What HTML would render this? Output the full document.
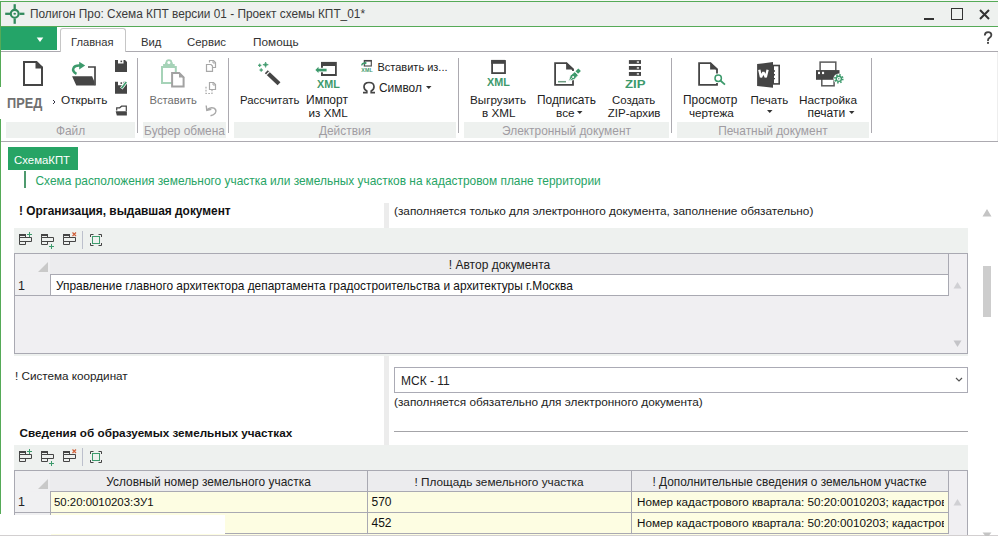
<!DOCTYPE html>
<html><head><meta charset="utf-8">
<style>
*{box-sizing:border-box;margin:0;padding:0}
html,body{width:998px;height:536px;overflow:hidden;background:#fff;font-family:"Liberation Sans",sans-serif;font-size:12px;color:#222}
.a{position:absolute}
.t{position:absolute;white-space:nowrap;line-height:1}
svg.a{overflow:visible}
</style></head><body>
<div class="a" style="left:0px;top:0px;width:998px;height:1px;background:#f6f9f6;"></div>
<div class="a" style="left:0px;top:1px;width:998px;height:1px;background:#55aa57;"></div>
<div class="a" style="left:1px;top:2px;width:997px;height:24px;background:#eef1ef;"></div>
<div class="a" style="left:0px;top:26px;width:998px;height:1px;background:#55aa57;"></div>
<svg class="a" style="left:4px;top:3px" width="22" height="22" viewBox="0 0 22 22"><g stroke="#318a5c" stroke-width="2.3" fill="none"><line x1="1.2" y1="10.8" x2="6" y2="10.8"/><line x1="15.5" y1="10.8" x2="20.4" y2="10.8"/><line x1="10.7" y1="1.2" x2="10.7" y2="6"/><line x1="10.7" y1="15.5" x2="10.7" y2="20.8"/><circle cx="10.7" cy="10.8" r="3.9" stroke-width="2.1"/></g><ellipse cx="10.7" cy="10.8" rx="1.3" ry="1" fill="#318a5c"/></svg>
<div class="t" style="left:30px;top:8.00px;font-size:12.3px;color:#3a3a3a;font-weight:normal;transform:scaleX(0.963);transform-origin:0 0">Полигон Про: Схема КПТ версии 01 - Проект схемы КПТ_01*</div>
<div class="a" style="left:924px;top:18px;width:10px;height:2px;background:#333;"></div>
<div class="a" style="left:951px;top:8px;width:12px;height:12px;border:1.6px solid #333"></div>
<svg class="a" style="left:979px;top:9px" width="11" height="11" viewBox="0 0 11 11"><path d="M1 1L10 10M10 1L1 10" stroke="#333" stroke-width="2"/></svg>
<div class="a" style="left:1px;top:27px;width:56px;height:23px;background:#24a468;"></div>
<svg class="a" style="left:36px;top:37px" width="8" height="6" viewBox="0 0 8 6"><path d="M0.7 0.5H7.3L4 5Z" fill="#fff"/></svg>
<div class="a" style="left:0px;top:51px;width:998px;height:1px;background:#acaab0;"></div>
<div class="a" style="left:60px;top:28px;width:66px;height:24px;background:#fff;border:1px solid #c6c6c6;border-bottom:none;border-radius:3px 3px 0 0"></div>
<div class="t" style="left:71px;top:37.00px;font-size:11.2px;color:#333;font-weight:normal;">Главная</div>
<div class="t" style="left:141px;top:37.00px;font-size:11.3px;color:#333;font-weight:normal;">Вид</div>
<div class="t" style="left:187px;top:37.00px;font-size:11.4px;color:#333;font-weight:normal;">Сервис</div>
<div class="t" style="left:253px;top:37.00px;font-size:11.8px;color:#333;font-weight:normal;">Помощь</div>
<svg class="a" style="left:982px;top:31px" width="12" height="14" viewBox="0 0 12 14"><path d="M2.8 4.6C2.8 2.2 4.3 1.2 6.1 1.2C8 1.2 9.4 2.4 9.4 4.1C9.4 5.6 8.4 6.3 7.3 7C6.3 7.7 6 8.3 6 9.3V10" fill="none" stroke="#444" stroke-width="1.8"/><rect x="5.05" y="10.9" width="1.9" height="1.9" fill="#444"/></svg>
<div class="a" style="left:0px;top:141px;width:998px;height:1px;background:#acaab0;"></div>
<div class="a" style="left:6px;top:122px;width:129px;height:16px;background:#eef1ef;"></div>
<div class="t" style="left:-79.5px;width:300px;text-align:center;top:126.00px;font-size:11.9px;color:#a09ca2;font-weight:normal;">Файл</div>
<div class="a" style="left:143px;top:122px;width:83px;height:16px;background:#eef1ef;"></div>
<div class="t" style="left:34.5px;width:300px;text-align:center;top:126.00px;font-size:11.9px;color:#a09ca2;font-weight:normal;">Буфер обмена</div>
<div class="a" style="left:234px;top:122px;width:222px;height:16px;background:#eef1ef;"></div>
<div class="t" style="left:195.0px;width:300px;text-align:center;top:126.00px;font-size:11.9px;color:#a09ca2;font-weight:normal;">Действия</div>
<div class="a" style="left:464px;top:122px;width:205px;height:16px;background:#eef1ef;"></div>
<div class="t" style="left:416.5px;width:300px;text-align:center;top:126.00px;font-size:11.9px;color:#a09ca2;font-weight:normal;">Электронный документ</div>
<div class="a" style="left:677px;top:122px;width:192px;height:16px;background:#eef1ef;"></div>
<div class="t" style="left:623.0px;width:300px;text-align:center;top:126.00px;font-size:11.9px;color:#a09ca2;font-weight:normal;">Печатный документ</div>
<div class="a" style="left:137px;top:58px;width:1px;height:75px;background:#acaab0;"></div>
<div class="a" style="left:228px;top:58px;width:1px;height:75px;background:#acaab0;"></div>
<div class="a" style="left:458px;top:58px;width:1px;height:75px;background:#acaab0;"></div>
<div class="a" style="left:671px;top:58px;width:1px;height:75px;background:#acaab0;"></div>
<div class="a" style="left:871px;top:58px;width:1px;height:75px;background:#acaab0;"></div>
<svg class="a" style="left:22px;top:61px" width="22" height="26" viewBox="0 0 22 26"><path d="M2 1H14.5L20 6.5V24H2Z" fill="none" stroke="#454545" stroke-width="2"/><path d="M13.5 1V7.5H21V6Z" fill="#454545"/></svg>
<div class="t" style="left:7px;top:97.00px;font-size:13.8px;color:#707070;font-weight:bold;transform:scaleX(0.925);transform-origin:0 0">ПРЕД</div>
<svg class="a" style="left:52px;top:99px" width="4" height="6" viewBox="0 0 4 6"><path d="M1 1L3 3L1 5" stroke="#334" stroke-width="1" fill="none"/></svg>
<svg class="a" style="left:68px;top:56px" width="32" height="34" viewBox="0 0 32 34"><path d="M20 11H27V29.5" fill="none" stroke="#454545" stroke-width="1.7"/><path d="M4.1 20.3H24.1L26.5 26V29.5H8.3Z" fill="#454545"/><path d="M8.5 17.8C5.5 16.5 4.5 14 5.5 12C6.5 9.8 9 9.2 12.5 9.5" fill="none" stroke="#3d9a6c" stroke-width="2.5"/><path d="M11.2 5.8L17.2 9.6L11.2 13.6Z" fill="#3d9a6c"/></svg>
<div class="t" style="left:61px;top:95.00px;font-size:11.8px;color:#222;font-weight:normal;">Открыть</div>
<svg class="a" style="left:115px;top:60px" width="12" height="12" viewBox="0 0 12 12"><path d="M0 0H3V3.5H8.5V0H10L12 2V12H0Z" fill="#454545"/><rect x="5.5" y="0.6" width="1.6" height="1.6" fill="#454545"/></svg>
<svg class="a" style="left:115px;top:81px" width="13" height="13" viewBox="0 0 13 13"><path d="M0 0.7H3V4.2H8.5V0.7H10L12 2.7V12.7H0Z" fill="#454545"/><rect x="5.5" y="1.3" width="1.6" height="1.6" fill="#454545"/><path d="M6.3 7.5L11.3 1" stroke="#fff" stroke-width="3"/><path d="M6.5 7.3L11.3 1" stroke="#3d9a6c" stroke-width="1.6"/></svg>
<svg class="a" style="left:115px;top:105px" width="13" height="11" viewBox="0 0 13 11"><path d="M1.7 5.5V2.8H4.7L6.6 1.2H11.3V6" fill="none" stroke="#454545" stroke-width="1.2"/><path d="M0.7 6.2H11.9V10.6H1.8Z" fill="#454545"/></svg>
<svg class="a" style="left:158px;top:58px" width="30" height="32" viewBox="0 0 30 32"><rect x="4" y="9" width="13.8" height="16" fill="none" stroke="#a6d3b8" stroke-width="2"/><rect x="5.1" y="6" width="11.6" height="2.5" fill="#a6d3b8"/><rect x="7" y="4.5" width="7.8" height="2" fill="#a6d3b8"/><circle cx="10.9" cy="4.5" r="3.3" fill="#a6d3b8"/><circle cx="10.9" cy="4.6" r="1.5" fill="#fff"/><path d="M14.1 15H21.2L25.6 19.4V28.6H14.1Z" fill="#fff" stroke="#a2a2a2" stroke-width="2"/><path d="M21 14.2V19.5H26.5Z" fill="#a2a2a2"/></svg>
<div class="t" style="left:149.5px;top:95.00px;font-size:11.2px;color:#6e6e6e;font-weight:normal;">Вставить</div>
<svg class="a" style="left:205px;top:59px" width="12" height="14" viewBox="0 0 12 14"><path d="M4.5 3.5V1.5H8.5L10.5 3.5V8.5H7.5" fill="none" stroke="#a8a8a8" stroke-width="1.2"/><path d="M1.5 5.5H6L7.5 7V12.3H1.5Z" fill="#fff" stroke="#a8a8a8" stroke-width="1.2"/><path d="M8 1.5V4H10.5" fill="none" stroke="#a8a8a8" stroke-width="1"/></svg>
<svg class="a" style="left:205px;top:81px" width="12" height="14" viewBox="0 0 12 14"><path d="M1 5.8V12.5H7V8" fill="none" stroke="#a8a8a8" stroke-width="1.2" stroke-dasharray="1.6 1.4"/><path d="M4.5 1.5H8.5L10.5 3.5V8.5H4.5Z" fill="#fff" stroke="#a8a8a8" stroke-width="1.2"/><path d="M8 1.5V4H10.5" fill="none" stroke="#a8a8a8" stroke-width="1"/></svg>
<svg class="a" style="left:205px;top:104px" width="13" height="13" viewBox="0 0 13 13"><path d="M1.2 1.5L1.8 6.3L6.3 5.2" fill="none" stroke="#a8a8a8" stroke-width="1.4"/><path d="M2 5.8C4.5 3 9 3 10.5 5.5C12 8 10 10.5 5.5 11.8" fill="none" stroke="#a8a8a8" stroke-width="1.5"/></svg>
<svg class="a" style="left:254px;top:56px" width="32" height="32" viewBox="0 0 32 32"><path d="M12.3 15.7L25 27.8" stroke="#454545" stroke-width="4.2"/><path d="M12.3 18.9L15.6 15.6" stroke="#fff" stroke-width="1.2"/><path d="M11.6 6Q11.6 8.7 14.3 8.7Q11.6 8.7 11.6 11.4Q11.6 8.7 8.9 8.7Q11.6 8.7 11.6 6Z" fill="#3d9a6c" stroke="#3d9a6c" stroke-width="0.7"/><path d="M5.7 7.7Q5.7 9.3 7.3 9.3Q5.7 9.3 5.7 10.9Q5.7 9.3 4.1 9.3Q5.7 9.3 5.7 7.7Z" fill="#3d9a6c" stroke="#3d9a6c" stroke-width="0.7"/><path d="M7.2 12.4Q7.2 14 8.8 14Q7.2 14 7.2 15.6Q7.2 14 5.6 14Q7.2 14 7.2 12.4Z" fill="#3d9a6c" stroke="#3d9a6c" stroke-width="0.7"/></svg>
<div class="t" style="left:240px;top:95.00px;font-size:11.4px;color:#222;font-weight:normal;">Рассчитать</div>
<svg class="a" style="left:312px;top:58px" width="28" height="20" viewBox="0 0 28 20"><path d="M9.9 8V17H23.9V8" fill="none" stroke="#454545" stroke-width="1.8"/><rect x="9" y="3.9" width="15.8" height="4.1" fill="#454545"/><path d="M9.9 8V9.5M9.9 14.5V17" stroke="#454545" stroke-width="1.8"/><path d="M6 12.05H14.6" stroke="#fff" stroke-width="4.5"/><path d="M6 12.05H14.6" stroke="#3d9a6c" stroke-width="2.7"/><path d="M3.4 11.9L6.5 8.8V15Z" fill="#3d9a6c"/></svg>
<div class="t" style="left:317px;top:79.00px;font-size:10.8px;color:#3d9a6c;font-weight:bold;">XML</div>
<div class="t" style="left:306px;top:94.00px;font-size:12px;color:#222;font-weight:normal;">Импорт</div>
<div class="t" style="left:308.5px;top:107.00px;font-size:11.7px;color:#222;font-weight:normal;">из XML</div>
<svg class="a" style="left:360px;top:59px" width="14" height="14" viewBox="0 0 14 14"><rect x="4.3" y="1.5" width="7" height="5.5" fill="none" stroke="#454545" stroke-width="1.1"/><rect x="4" y="1" width="7.6" height="1.6" fill="#454545"/><path d="M1.8 6.5C1.8 4.5 3 4 5.5 4" fill="none" stroke="#3d9a6c" stroke-width="1.3"/><path d="M5 2.6L7 4L5 5.4Z" fill="#3d9a6c"/><text x="7" y="13" font-family="Liberation Sans" font-size="5.3" font-weight="bold" fill="#3d9a6c" text-anchor="middle" textLength="11.5">XML</text></svg>
<div class="t" style="left:377.5px;top:62.00px;font-size:11px;color:#222;font-weight:normal;">Вставить из...</div>
<svg class="a" style="left:362px;top:81px" width="14" height="13" viewBox="0 0 14 13"><path d="M1 11.6H4.8V10C2.8 9 2 7.3 2 5.8C2 3 4.2 1.5 7 1.5C9.8 1.5 12 3 12 5.8C12 7.3 11.2 9 9.2 10V11.6H13" fill="none" stroke="#454545" stroke-width="1.7"/></svg>
<div class="t" style="left:379px;top:83.00px;font-size:11.9px;color:#222;font-weight:normal;">Символ</div>
<svg class="a" style="left:426px;top:86px" width="6" height="4" viewBox="0 0 6 4"><path d="M0 0H5.5L2.75 3Z" fill="#333"/></svg>
<svg class="a" style="left:490px;top:59px" width="16" height="16" viewBox="0 0 16 16"><rect x="2.1" y="2" width="12.9" height="12.1" fill="none" stroke="#454545" stroke-width="1.8"/><rect x="1.2" y="0.9" width="13.7" height="3.9" fill="#454545"/></svg>
<div class="t" style="left:487px;top:77.00px;font-size:10.8px;color:#3d9a6c;font-weight:bold;">XML</div>
<div class="t" style="left:470px;top:94.00px;font-size:11.7px;color:#222;font-weight:normal;">Выгрузить</div>
<div class="t" style="left:482px;top:107.00px;font-size:11.7px;color:#222;font-weight:normal;">в XML</div>
<svg class="a" style="left:550px;top:58px" width="34" height="32" viewBox="0 0 34 32"><path d="M23 13V11.5L16.5 5.1H5.1V26.9H23V22" fill="none" stroke="#454545" stroke-width="1.8"/><path d="M16.1 4.2V11.6H23.9V11Z" fill="#454545"/><path d="M8 23.7H16" stroke="#6f9c83" stroke-width="1.5"/><path d="M18.5 23.2L20.3 17.5L24.8 13.7L28.3 17.2L24.3 21.5Z" fill="#3d9a6c" stroke="#fff" stroke-width="0.8"/><circle cx="23.1" cy="19" r="1" fill="#fff"/><path d="M19 22.8L22.5 19.5" stroke="#fff" stroke-width="0.7"/><path d="M26.8 14.6L29.6 11.8" stroke="#3d9a6c" stroke-width="3.6"/></svg>
<div class="t" style="left:537px;top:95.00px;font-size:11.9px;color:#222;font-weight:normal;">Подписать</div>
<div class="t" style="left:556px;top:108.00px;font-size:11.8px;color:#222;font-weight:normal;">все</div>
<svg class="a" style="left:577px;top:111px" width="6" height="4" viewBox="0 0 6 4"><path d="M0 0H5.5L2.75 3Z" fill="#333"/></svg>
<svg class="a" style="left:620px;top:56px" width="24" height="22" viewBox="0 0 24 22"><rect x="8.9" y="4.1" width="12.1" height="3.8" fill="#454545"/><rect x="8.9" y="10" width="12.1" height="3.8" fill="#454545"/><rect x="8.9" y="16" width="12.1" height="3.9" fill="#454545"/><rect x="16.8" y="5.4" width="2.2" height="1.3" fill="#fff"/><rect x="16.8" y="11.3" width="2.2" height="1.3" fill="#fff"/><rect x="16.8" y="17.3" width="2.2" height="1.3" fill="#fff"/></svg>
<div class="t" style="left:625px;top:79.00px;font-size:11px;color:#3d9a6c;font-weight:bold;transform:scaleX(1.2);transform-origin:0 0">ZIP</div>
<div class="t" style="left:612px;top:95.00px;font-size:11.4px;color:#222;font-weight:normal;">Создать</div>
<div class="t" style="left:607.8px;top:108.00px;font-size:11.5px;color:#222;font-weight:normal;">ZIP-архив</div>
<svg class="a" style="left:694px;top:58px" width="34" height="32" viewBox="0 0 34 32"><path d="M23 15.5V11.5L16.5 5.1H5.1V26.9H23V25" fill="none" stroke="#454545" stroke-width="1.8"/><path d="M16.1 4.2V11.6H23.9V11Z" fill="#454545"/><circle cx="24.2" cy="20.3" r="3.5" fill="#fff" stroke="#fff" stroke-width="1.5"/><circle cx="24.2" cy="20.3" r="3.2" fill="none" stroke="#3d9a6c" stroke-width="1.5"/><path d="M26.6 22.8L31 26.6" stroke="#3d9a6c" stroke-width="1.8"/></svg>
<div class="t" style="left:683px;top:95.00px;font-size:11.9px;color:#222;font-weight:normal;">Просмотр</div>
<div class="t" style="left:689px;top:107.00px;font-size:11.7px;color:#222;font-weight:normal;">чертежа</div>
<svg class="a" style="left:752px;top:58px" width="30" height="32" viewBox="0 0 30 32"><path d="M5.1 6L21 4.1V29.8L5.1 27.9Z" fill="#454545"/><rect x="21.2" y="7.5" width="6" height="18.4" fill="none" stroke="#454545" stroke-width="1.6"/><path d="M21 13H23M21 16.8H23M21 20.6H23" stroke="#454545" stroke-width="1.4"/><path d="M7.3 11.7L9 19.3L11.4 14.2L13.8 19.3L15.6 11.7" fill="none" stroke="#fff" stroke-width="2.3" stroke-linejoin="bevel"/></svg>
<div class="t" style="left:750.5px;top:95.00px;font-size:11.5px;color:#222;font-weight:normal;">Печать</div>
<svg class="a" style="left:767px;top:110px" width="6" height="4" viewBox="0 0 6 4"><path d="M0 0H5.5L2.75 3Z" fill="#333"/></svg>
<svg class="a" style="left:812px;top:56px" width="34" height="34" viewBox="0 0 34 34"><rect x="8.1" y="6.1" width="15.7" height="9" fill="none" stroke="#5a5a5a" stroke-width="1.5"/><rect x="9.8" y="22" width="12.3" height="7.8" fill="none" stroke="#5a5a5a" stroke-width="1.5"/><rect x="4" y="14.1" width="23.5" height="9.7" fill="#454545"/><rect x="6" y="15.8" width="2" height="2.3" fill="#fff"/><rect x="10" y="15.8" width="2.1" height="2.3" fill="#fff"/><circle cx="26.8" cy="22.8" r="5.4" fill="#fff"/><circle cx="26.8" cy="22.8" r="3.9" fill="none" stroke="#3d9a6c" stroke-width="1.8" stroke-dasharray="1.5 1.56"/><circle cx="26.8" cy="22.8" r="2.6" fill="none" stroke="#3d9a6c" stroke-width="1.4"/><circle cx="26.8" cy="22.8" r="0.7" fill="#3d9a6c"/></svg>
<div class="t" style="left:799px;top:95.00px;font-size:11.8px;color:#222;font-weight:normal;">Настройка</div>
<div class="t" style="left:807.5px;top:107.00px;font-size:12px;color:#222;font-weight:normal;">печати</div>
<svg class="a" style="left:849px;top:111px" width="6" height="4" viewBox="0 0 6 4"><path d="M0 0H5.5L2.75 3Z" fill="#333"/></svg>
<div class="a" style="left:997px;top:52px;width:1px;height:89px;background:#eeeeee;"></div>
<div class="a" style="left:0px;top:2px;width:1px;height:85px;background:#55aa57;"></div>
<div class="a" style="left:0px;top:119px;width:1px;height:395px;background:#55aa57;"></div>
<div class="a" style="left:8px;top:147px;width:70px;height:23px;background:#27a465;"></div>
<div class="t" style="left:14px;top:155.00px;font-size:11.4px;color:#fff;font-weight:normal;">СхемаКПТ</div>
<div class="a" style="left:24px;top:171px;width:2px;height:17px;background:#4e9a6e;"></div>
<div class="t" style="left:35.5px;top:176.00px;font-size:11.92px;color:#27a465;font-weight:normal;">Схема расположения земельного участка или земельных участков на кадастровом плане территории</div>
<div class="t" style="left:19px;top:206.00px;font-size:11.9px;color:#111;font-weight:bold;">! Организация, выдавшая документ</div>
<div class="a" style="left:384px;top:203px;width:5px;height:25px;background:#ececec;"></div>
<div class="t" style="left:394px;top:206.00px;font-size:11.8px;color:#222;font-weight:normal;">(заполняется только для электронного документа, заполнение обязательно)</div>
<div class="a" style="left:14px;top:228px;width:954px;height:25px;background:#eef1ef;"></div>
<svg class="a" style="left:19px;top:232px" width="15" height="17" viewBox="0 0 15 17"><path d="M0.5 2.5H6.5V5.5H0.5ZM0.5 5.5H12.5V9.5H0.5ZM0.5 9.5H6.5V12.5H0.5Z" fill="none" stroke="#454545" stroke-width="1"/><rect x="0" y="2" width="7" height="2" fill="#454545"/><path d="M10.5 0V5M8 2.5H13" stroke="#3d9a6c" stroke-width="1"/></svg>
<svg class="a" style="left:41px;top:232px" width="15" height="17" viewBox="0 0 15 17"><path d="M0.5 2.5H6.5V5.5H0.5ZM0.5 5.5H12.5V9.5H0.5ZM0.5 9.5H6.5V12.5H0.5Z" fill="none" stroke="#454545" stroke-width="1"/><rect x="0" y="2" width="7" height="2" fill="#454545"/><path d="M10.5 12V17M8 14.5H13" stroke="#3d9a6c" stroke-width="1"/></svg>
<svg class="a" style="left:63px;top:232px" width="15" height="17" viewBox="0 0 15 17"><path d="M0.5 2.5H6.5V5.5H0.5ZM0.5 5.5H12.5V9.5H0.5ZM0.5 9.5H6.5V12.5H0.5Z" fill="none" stroke="#454545" stroke-width="1"/><rect x="0" y="2" width="7" height="2" fill="#454545"/><path d="M9.5 0.5L13 4M13 0.5L9.5 4" stroke="#d0603a" stroke-width="1.2"/></svg>
<div class="a" style="left:82px;top:231px;width:1px;height:18px;background:#bcc0cc;"></div>
<svg class="a" style="left:90px;top:234px" width="13" height="13" viewBox="0 0 13 13"><rect x="2.5" y="2.5" width="7" height="7" fill="none" stroke="#3d9a6c" stroke-width="1"/><path d="M0.5 3V0.5H3.5M8.5 0.5H11.5V3M11.5 9V11.5H8.5M3.5 11.5H0.5V9" fill="none" stroke="#454545" stroke-width="1"/></svg>
<div class="a" style="left:14px;top:253px;width:954px;height:101px;background:#f0eff2;border:1px solid #a9a9b2"></div>
<div class="a" style="left:15px;top:254px;width:934px;height:20px;background:#ececee;"></div>
<div class="a" style="left:15px;top:254px;width:35px;height:20px;background:#f0f0f2;"></div>
<svg class="a" style="left:38px;top:262px" width="11" height="11" viewBox="0 0 11 11"><path d="M10 0V10H0Z" fill="#c9c9c9"/></svg>
<div class="a" style="left:948px;top:254px;width:1px;height:42px;background:#a9a9b2;"></div>
<div class="t" style="left:349.5px;width:300px;text-align:center;top:259.00px;font-size:12px;color:#222;font-weight:normal;">! Автор документа</div>
<div class="a" style="left:50px;top:274px;width:899px;height:1px;background:#a9a9b2;"></div>
<div class="a" style="left:15px;top:295px;width:934px;height:1px;background:#a9a9b2;"></div>
<div class="a" style="left:15px;top:275px;width:35px;height:20px;background:#f0f0f2;"></div>
<div class="a" style="left:50px;top:274px;width:1px;height:22px;background:#a9a9b2;"></div>
<div class="a" style="left:51px;top:275px;width:897px;height:20px;background:#fff;"></div>
<div class="t" style="left:18px;top:280.00px;font-size:12.5px;color:#222;font-weight:normal;">1</div>
<div class="t" style="left:56px;top:281.00px;font-size:11.88px;color:#111;font-weight:normal;">Управление главного архитектора департамента градостроительства и архитектуры г.Москва</div>
<svg class="a" style="left:953px;top:281px" width="10" height="8" viewBox="0 0 10 8"><path d="M0.5 7.5L4.5 1L8.5 7.5Z" fill="#d0d0d4"/></svg>
<svg class="a" style="left:953px;top:340px" width="10" height="8" viewBox="0 0 10 8"><path d="M0.5 0.5L4.5 7L8.5 0.5Z" fill="#c4c4c8"/></svg>
<div class="a" style="left:14px;top:354px;width:954px;height:2px;background:#eef1ef;"></div>
<div class="t" style="left:15px;top:370.00px;font-size:11.7px;color:#222;font-weight:normal;">! Система координат</div>
<div class="a" style="left:384px;top:356px;width:5px;height:89px;background:#ececec;"></div>
<div class="a" style="left:394px;top:367px;width:574px;height:26px;background:#fff;border:1px solid #ababb5"></div>
<div class="t" style="left:401px;top:375.00px;font-size:12px;color:#222;font-weight:normal;">МСК - 11</div>
<svg class="a" style="left:955px;top:377px" width="8" height="5" viewBox="0 0 8 5"><path d="M1 1L4 4L7 1" stroke="#555" fill="none" stroke-width="1.2"/></svg>
<div class="t" style="left:394px;top:397.00px;font-size:11.8px;color:#222;font-weight:normal;">(заполняется обязательно для электронного документа)</div>
<div class="a" style="left:394px;top:431px;width:574px;height:1px;background:#a4a4a8;"></div>
<div class="t" style="left:19.5px;top:427.00px;font-size:11.73px;color:#111;font-weight:bold;">Сведения об образуемых земельных участках</div>
<div class="a" style="left:14px;top:445px;width:954px;height:25px;background:#eef1ef;"></div>
<svg class="a" style="left:19px;top:449px" width="15" height="17" viewBox="0 0 15 17"><path d="M0.5 2.5H6.5V5.5H0.5ZM0.5 5.5H12.5V9.5H0.5ZM0.5 9.5H6.5V12.5H0.5Z" fill="none" stroke="#454545" stroke-width="1"/><rect x="0" y="2" width="7" height="2" fill="#454545"/><path d="M10.5 0V5M8 2.5H13" stroke="#3d9a6c" stroke-width="1"/></svg>
<svg class="a" style="left:41px;top:449px" width="15" height="17" viewBox="0 0 15 17"><path d="M0.5 2.5H6.5V5.5H0.5ZM0.5 5.5H12.5V9.5H0.5ZM0.5 9.5H6.5V12.5H0.5Z" fill="none" stroke="#454545" stroke-width="1"/><rect x="0" y="2" width="7" height="2" fill="#454545"/><path d="M10.5 12V17M8 14.5H13" stroke="#3d9a6c" stroke-width="1"/></svg>
<svg class="a" style="left:63px;top:449px" width="15" height="17" viewBox="0 0 15 17"><path d="M0.5 2.5H6.5V5.5H0.5ZM0.5 5.5H12.5V9.5H0.5ZM0.5 9.5H6.5V12.5H0.5Z" fill="none" stroke="#454545" stroke-width="1"/><rect x="0" y="2" width="7" height="2" fill="#454545"/><path d="M9.5 0.5L13 4M13 0.5L9.5 4" stroke="#d0603a" stroke-width="1.2"/></svg>
<div class="a" style="left:82px;top:448px;width:1px;height:18px;background:#bcc0cc;"></div>
<svg class="a" style="left:90px;top:451px" width="13" height="13" viewBox="0 0 13 13"><rect x="2.5" y="2.5" width="7" height="7" fill="none" stroke="#3d9a6c" stroke-width="1"/><path d="M0.5 3V0.5H3.5M8.5 0.5H11.5V3M11.5 9V11.5H8.5M3.5 11.5H0.5V9" fill="none" stroke="#454545" stroke-width="1"/></svg>
<div class="a" style="left:14px;top:470px;width:954px;height:66px;background:#f0eff2;border:1px solid #a9a9b2"></div>
<div class="a" style="left:15px;top:471px;width:934px;height:20px;background:#ececee;"></div>
<div class="a" style="left:15px;top:471px;width:35px;height:20px;background:#f0f0f2;"></div>
<svg class="a" style="left:38px;top:479px" width="11" height="11" viewBox="0 0 11 11"><path d="M10 0V10H0Z" fill="#c9c9c9"/></svg>
<div class="a" style="left:367px;top:471px;width:1px;height:63px;background:#a9a9b2;"></div>
<div class="a" style="left:631px;top:471px;width:1px;height:63px;background:#a9a9b2;"></div>
<div class="a" style="left:948px;top:471px;width:1px;height:63px;background:#a9a9b2;"></div>
<div class="t" style="left:58.5px;width:300px;text-align:center;top:477.00px;font-size:11.9px;color:#222;font-weight:normal;">Условный номер земельного участка</div>
<div class="t" style="left:349px;width:300px;text-align:center;top:477.00px;font-size:11.8px;color:#222;font-weight:normal;">! Площадь земельного участка</div>
<div class="t" style="left:639.5px;width:300px;text-align:center;top:477.00px;font-size:11.85px;color:#222;font-weight:normal;">! Дополнительные сведения о земельном участке</div>
<div class="a" style="left:50px;top:491px;width:899px;height:1px;background:#a9a9b2;"></div>
<div class="a" style="left:15px;top:512px;width:934px;height:1px;background:#a9a9b2;"></div>
<div class="a" style="left:15px;top:533px;width:934px;height:1px;background:#a9a9b2;"></div>
<div class="a" style="left:51px;top:492px;width:316px;height:20px;background:#fdfde2;"></div>
<div class="a" style="left:368px;top:492px;width:263px;height:20px;background:#fdfde2;"></div>
<div class="a" style="left:632px;top:492px;width:316px;height:20px;background:#fdfde2;"></div>
<div class="a" style="left:51px;top:513px;width:316px;height:20px;background:#fdfde2;"></div>
<div class="a" style="left:368px;top:513px;width:263px;height:20px;background:#fdfde2;"></div>
<div class="a" style="left:632px;top:513px;width:316px;height:20px;background:#fdfde2;"></div>
<div class="a" style="left:15px;top:492px;width:35px;height:20px;background:#f0f0f2;"></div>
<div class="a" style="left:15px;top:513px;width:35px;height:20px;background:#f0f0f2;"></div>
<div class="a" style="left:50px;top:491px;width:1px;height:43px;background:#a9a9b2;"></div>
<div class="t" style="left:18px;top:496.00px;font-size:12.5px;color:#222;font-weight:normal;">1</div>
<div class="t" style="left:54px;top:497.00px;font-size:11.4px;color:#111;font-weight:normal;">50:20:0010203:ЗУ1</div>
<div class="t" style="left:371.5px;top:496.00px;font-size:12px;color:#111;font-weight:normal;">570</div>
<div class="t" style="left:371.5px;top:517.00px;font-size:12px;color:#111;font-weight:normal;">452</div>
<div class="a" style="left:632px;top:492px;width:312px;height:41px;overflow:hidden">
<div class="t" style="left:5px;top:4.00px;font-size:11.7px;color:#111;font-weight:normal;">Номер кадастрового квартала: 50:20:0010203; кадастровый</div>
<div class="t" style="left:5px;top:25.00px;font-size:11.7px;color:#111;font-weight:normal;">Номер кадастрового квартала: 50:20:0010203; кадастровый</div>
</div>
<svg class="a" style="left:953px;top:498px" width="10" height="8" viewBox="0 0 10 8"><path d="M0.5 7.5L4.5 1L8.5 7.5Z" fill="#d0d0d4"/></svg>
<div class="a" style="left:0px;top:515px;width:225px;height:20px;background:#fff;"></div>
<div class="a" style="left:51px;top:534px;width:316px;height:1px;background:#fdfde2;"></div>
<div class="a" style="left:368px;top:534px;width:263px;height:1px;background:#fdfde2;"></div>
<div class="a" style="left:632px;top:534px;width:316px;height:1px;background:#fdfde2;"></div>
<div class="a" style="left:0px;top:535px;width:998px;height:1px;background:#d2cfd0;"></div>
<svg class="a" style="left:982px;top:208px" width="10" height="9" viewBox="0 0 10 9"><path d="M0.5 8.5L5 1L9.5 8.5Z" fill="#c4c4c4"/></svg>
<div class="a" style="left:983px;top:266px;width:8px;height:51px;background:#cdcdcd;"></div>
<svg class="a" style="left:982px;top:532px" width="10" height="6" viewBox="0 0 10 6"><path d="M0.5 0.5L5 6L9.5 0.5Z" fill="#c4c4c4"/></svg>
</body></html>
